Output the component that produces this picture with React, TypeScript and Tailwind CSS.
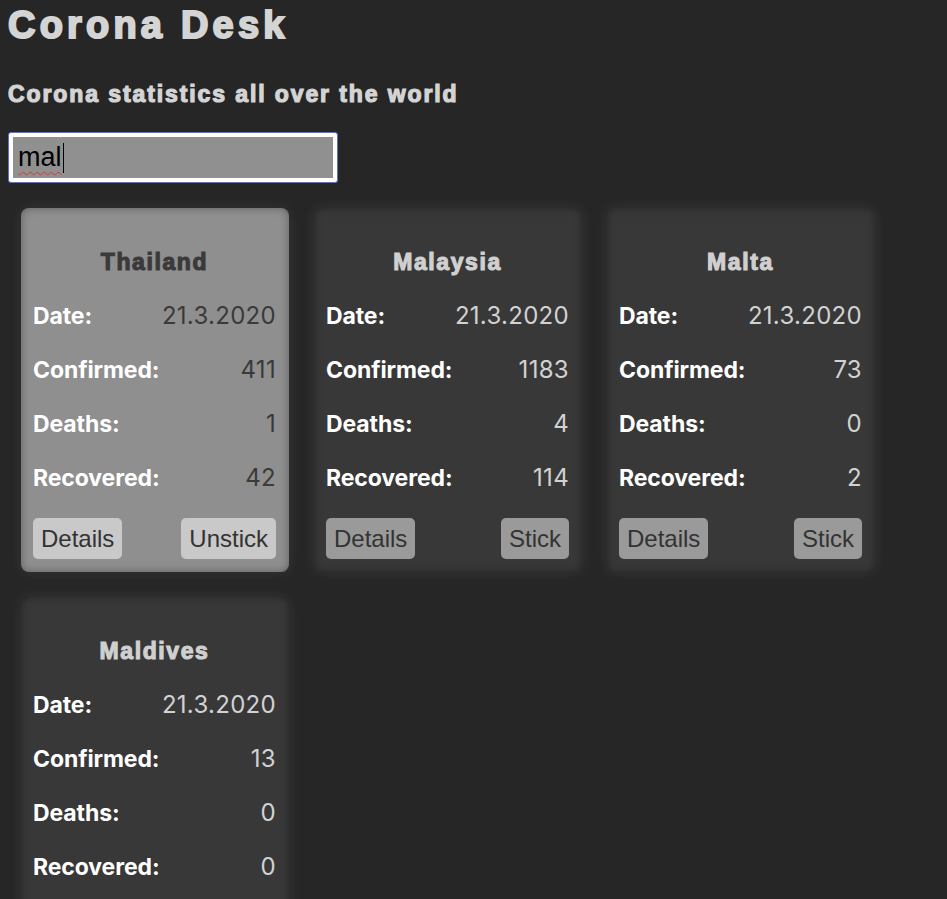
import React from "react";

type Country = {
  name: string;
  date: string;
  confirmed: number;
  deaths: number;
  recovered: number;
  stuck: boolean;
};

const data: Country[] = [
  { name: "Thailand", date: "21.3.2020", confirmed: 411, deaths: 1, recovered: 42, stuck: true },
  { name: "Malaysia", date: "21.3.2020", confirmed: 1183, deaths: 4, recovered: 114, stuck: false },
  { name: "Malta", date: "21.3.2020", confirmed: 73, deaths: 0, recovered: 2, stuck: false },
  { name: "Maldives", date: "21.3.2020", confirmed: 13, deaths: 0, recovered: 0, stuck: false },
];

function Row({ label, value, stuck }: { label: string; value: string | number; stuck: boolean }) {
  return (
    <div className="flex h-[54px] items-center justify-between">
      <span className="font-['Inter',sans-serif] text-[23px] font-bold tracking-[-0.1px] text-white">{label}</span>
      <span
        className={
          "font-['Inter',sans-serif] text-[24px] font-normal tracking-[0.3px] " + (stuck ? "text-[#3a3a3a]" : "text-[#d2d2d2]")
        }
      >
        {value}
      </span>
    </div>
  );
}

function Card({ c }: { c: Country }) {
  return (
    <div
      className={
        "w-[268px] rounded-[8px] pl-3 pr-[13px] pt-[27px] pb-[13px] shadow-[0_0_14px_rgba(255,255,255,0.08),inset_0_0_8px_rgba(0,0,0,0.35)] " +
        (c.stuck ? "bg-[#8f8f8f]" : "bg-[#383838]")
      }
    >
      <div
        className={
          "flex h-[54px] items-center justify-center font-['Liberation_Sans',Arial,sans-serif] text-[23px] font-bold tracking-[1.6px] [-webkit-text-stroke-width:1.1px] " +
          (c.stuck ? "text-[#3a3a3a]" : "text-[#d0d0d0]")
        }
      >
        {c.name}
      </div>
      <Row label="Date:" value={c.date} stuck={c.stuck} />
      <Row label="Confirmed:" value={c.confirmed} stuck={c.stuck} />
      <Row label="Deaths:" value={c.deaths} stuck={c.stuck} />
      <Row label="Recovered:" value={c.recovered} stuck={c.stuck} />
      <div className="mt-[13px] flex items-center justify-between">
        <button
          className={
            "h-[41px] rounded-[5px] px-2 font-['Liberation_Sans',Arial,sans-serif] text-[24px] text-[#333333] " +
            (c.stuck ? "bg-[#c9c9c9]" : "bg-[#9a9a9a]")
          }
        >
          Details
        </button>
        <button
          className={
            "h-[41px] rounded-[5px] px-2 font-['Liberation_Sans',Arial,sans-serif] text-[24px] text-[#333333] " +
            (c.stuck ? "bg-[#c9c9c9]" : "bg-[#9a9a9a]")
          }
        >
          {c.stuck ? "Unstick" : "Stick"}
        </button>
      </div>
    </div>
  );
}

export default function App() {
  return (
    <div className="min-h-screen overflow-hidden bg-[#262626] px-2 pt-[3px]">
      <h1 className="font-['Liberation_Sans',Arial,sans-serif] text-[38px] leading-[44px] font-bold tracking-[4.2px] text-[#d4d4d4] [-webkit-text-stroke-width:2px]">
        Corona Desk
      </h1>
      <h2 className="mt-[34px] font-['Liberation_Sans',Arial,sans-serif] text-[23px] leading-[27px] font-bold tracking-[1.9px] text-[#d4d4d4] [-webkit-text-stroke-width:1.2px]">
        Corona statistics all over the world
      </h2>
      <div className="mt-[24px] w-[330px] rounded-[3px] border border-[#5b6fd6] bg-white p-[4px]">
        <div className="flex h-[41px] items-center bg-[#909090] px-[5px] font-['Liberation_Sans',Arial,sans-serif] text-[27px] text-black">
          <span className="underline decoration-wavy decoration-[#e03030] decoration-1 underline-offset-[5px]">mal</span>
          <span className="ml-[1px] h-[30px] w-[1.5px] bg-black" />
        </div>
      </div>
      <div className="mt-[12px] flex flex-wrap gap-[25px] p-[13px]">
        {data.map((c) => (
          <Card key={c.name} c={c} />
        ))}
      </div>
    </div>
  );
}
